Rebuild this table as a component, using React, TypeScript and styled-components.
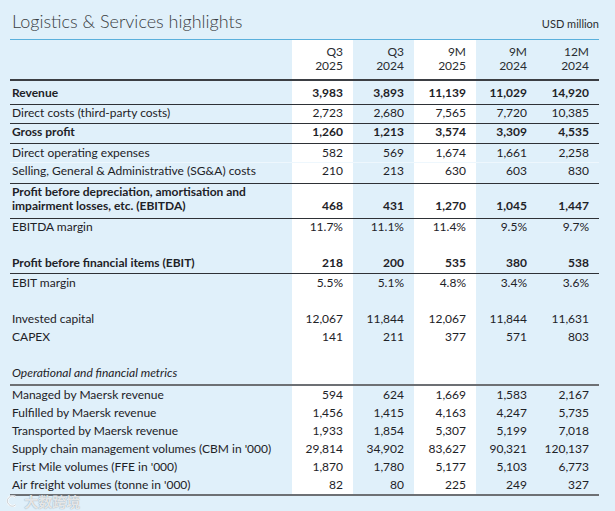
import React from "react";
import styled, { createGlobalStyle } from "styled-components";

const GlobalStyle = createGlobalStyle`
  html, body { margin: 0; padding: 0; background: #e0f0fa; }
  body { font-family: "Lato", "Noto Sans", sans-serif; color: #1e2227; }
`;

const Page = styled.div`
  position: relative;
  width: 615px;
  height: 511px;
  overflow: hidden;
  box-sizing: border-box;
  padding: 0 16px 0 10px;
  background: #e0f0fa;
`;

const TitleBar = styled.div`
  display: flex;
  justify-content: space-between;
  align-items: baseline;
  height: 40px;
  box-sizing: border-box;
  padding: 8px 0 0 2px;
  border-bottom: 1px solid #5ab0dc;
`;

const Title = styled.h1`
  margin: 0;
  font-family: "Lato", sans-serif;
  font-weight: 300;
  font-size: 18px;
  line-height: 26px;
  color: #3a3d42;
`;

const Unit = styled.span`
  font-size: 11px;
  color: #2a2d31;
`;

type LineKind = "none" | "thin" | "faint" | "thick" | "gray";

const lineCss: Record<LineKind, string> = {
  none: "none",
  thin: "1px solid #2e3136",
  faint: "1px solid #eef7fd",
  thick: "2px solid #3b3e43",
  gray: "2px solid #6d7074",
};

const Row = styled.div<{ $line?: LineKind; $pt?: number; $pb?: number; $lh?: number; $bold?: boolean; $italic?: boolean }>`
  display: grid;
  grid-template-columns: 282px 61px 61px 62px 61px 62px;
  border-bottom: ${(p) => lineCss[p.$line ?? "none"]};
  font-size: 12px;
  line-height: ${(p) => p.$lh ?? 16}px;
  font-weight: ${(p) => (p.$bold ? 700 : 400)};
  font-style: ${(p) => (p.$italic ? "italic" : "normal")};
  --pt: ${(p) => p.$pt ?? 0}px;
  --pb: ${(p) => p.$pb ?? 2}px;
`;

const Cell = styled.div<{ $white?: boolean; $num?: boolean }>`
  display: flex;
  flex-direction: column;
  justify-content: flex-end;
  padding: var(--pt) ${(p) => (p.$num ? "10px" : "0")} var(--pb) ${(p) => (p.$num ? "0" : "2px")};
  text-align: ${(p) => (p.$num ? "right" : "left")};
  background: ${(p) => (p.$white ? "#ffffff" : "transparent")};
  white-space: ${(p) => (p.$num ? "nowrap" : "normal")};
`;

const HeadRow = styled(Row)`
  font-size: 12px;
  color: #2a2d31;
`;

const Spacer = styled.div`
  display: grid;
  grid-template-columns: 282px 61px 61px 62px 61px 62px;
  height: 18px;
`;

const SpacerCell = styled.div<{ $white?: boolean }>`
  background: ${(p) => (p.$white ? "#ffffff" : "transparent")};
`;

const Watermark = styled.div`
  position: absolute;
  left: 5px;
  top: 493px;
  display: flex;
  align-items: center;
  gap: 3px;
  font-family: "Noto Sans CJK SC", sans-serif;
  font-size: 14px;
  line-height: 16px;
  font-weight: 700;
  color: rgba(255, 255, 255, 0.8);
  text-shadow: 0 0 1px rgba(110, 120, 130, 0.9);
`;

type RowData = {
  label: React.ReactNode;
  values: string[];
  line?: LineKind;
  pt?: number;
  pb?: number;
  lh?: number;
  bold?: boolean;
  italic?: boolean;
};

const whiteCols = [false, true, false, true, false, false];

const rows: (RowData | "spacer")[] = [
  { label: "Revenue", values: ["3,983", "3,893", "11,139", "11,029", "14,920"], bold: true, line: "thin", pt: 4, pb: 3 },
  { label: "Direct costs (third-party costs)", values: ["2,723", "2,680", "7,565", "7,720", "10,385"], line: "thin", pt: 0, pb: 2 },
  { label: "Gross profit", values: ["1,260", "1,213", "3,574", "3,309", "4,535"], bold: true, line: "thin", pt: 0, pb: 3 },
  { label: "Direct operating expenses", values: ["582", "569", "1,674", "1,661", "2,258"], line: "faint", pt: 1, pb: 1 },
  { label: "Selling, General & Administrative (SG&A) costs", values: ["210", "213", "630", "603", "830"], line: "thin", pt: 0, pb: 4 },
  {
    label: (
      <>
        Profit before depreciation, amortisation and
        <br />
        impairment losses, etc. (EBITDA)
      </>
    ),
    values: ["468", "431", "1,270", "1,045", "1,447"],
    bold: true,
    line: "thin",
    lh: 14,
    pt: 1,
    pb: 5,
  },
  { label: "EBITDA margin", values: ["11.7%", "11.1%", "11.4%", "9.5%", "9.7%"], pt: 0, pb: 2 },
  "spacer",
  { label: "Profit before financial items (EBIT)", values: ["218", "200", "535", "380", "538"], bold: true, line: "thin", pt: 0, pb: 2 },
  { label: "EBIT margin", values: ["5.5%", "5.1%", "4.8%", "3.4%", "3.6%"], pt: 1, pb: 1 },
  "spacer",
  { label: "Invested capital", values: ["12,067", "11,844", "12,067", "11,844", "11,631"], pt: 1, pb: 1 },
  { label: "CAPEX", values: ["141", "211", "377", "571", "803"], pt: 1, pb: 1 },
  "spacer",
  { label: "Operational and financial metrics", values: ["", "", "", "", ""], italic: true, line: "gray", pt: 1, pb: 3 },
  { label: "Managed by Maersk revenue", values: ["594", "624", "1,669", "1,583", "2,167"], pt: 1, pb: 1 },
  { label: "Fulfilled by Maersk revenue", values: ["1,456", "1,415", "4,163", "4,247", "5,735"], pt: 1, pb: 1 },
  { label: "Transported by Maersk revenue", values: ["1,933", "1,854", "5,307", "5,199", "7,018"], pt: 1, pb: 1 },
  { label: "Supply chain management volumes (CBM in '000)", values: ["29,814", "34,902", "83,627", "90,321", "120,137"], pt: 1, pb: 1 },
  { label: "First Mile volumes (FFE in '000)", values: ["1,870", "1,780", "5,177", "5,103", "6,773"], pt: 1, pb: 1 },
  { label: "Air freight volumes (tonne in '000)", values: ["82", "80", "225", "249", "327"], line: "gray", pt: 1, pb: 1 },
];

const headers = [
  ["Q3", "2025"],
  ["Q3", "2024"],
  ["9M", "2025"],
  ["9M", "2024"],
  ["12M", "2024"],
];

export default function App() {
  return (
    <>
      <GlobalStyle />
      <Page>
        <TitleBar>
          <Title>Logistics &amp; Services highlights</Title>
          <Unit>USD million</Unit>
        </TitleBar>
        <HeadRow $line="thick" $pt={5} $pb={6} $lh={14}>
          <Cell />
          {headers.map((h, i) => (
            <Cell key={i} $num $white={whiteCols[i + 1]}>
              <span>{h[0]}</span>
              <span>{h[1]}</span>
            </Cell>
          ))}
        </HeadRow>
        {rows.map((r, idx) =>
          r === "spacer" ? (
            <Spacer key={idx}>
              {whiteCols.map((w, i) => (
                <SpacerCell key={i} $white={w} />
              ))}
            </Spacer>
          ) : (
            <Row key={idx} $line={r.line} $pt={r.pt} $pb={r.pb} $lh={r.lh} $bold={r.bold} $italic={r.italic}>
              <Cell>
                <span>{r.label}</span>
              </Cell>
              {r.values.map((v, i) => (
                <Cell key={i} $num $white={whiteCols[i + 1]}>
                  <span>{v}</span>
                </Cell>
              ))}
            </Row>
          )
        )}
        <Watermark>
          <svg width="16" height="14" viewBox="0 0 16 14">
            <path d="M10.5 3 A5 5 0 1 0 10.5 11" fill="none" stroke="rgba(255,255,255,0.9)" strokeWidth="2.2" />
            <path d="M10.5 3 A5 5 0 1 0 10.5 11" fill="none" stroke="rgba(110,120,130,0.55)" strokeWidth="0.6" />
          </svg>
          <span>大数跨境</span>
        </Watermark>
      </Page>
    </>
  );
}
